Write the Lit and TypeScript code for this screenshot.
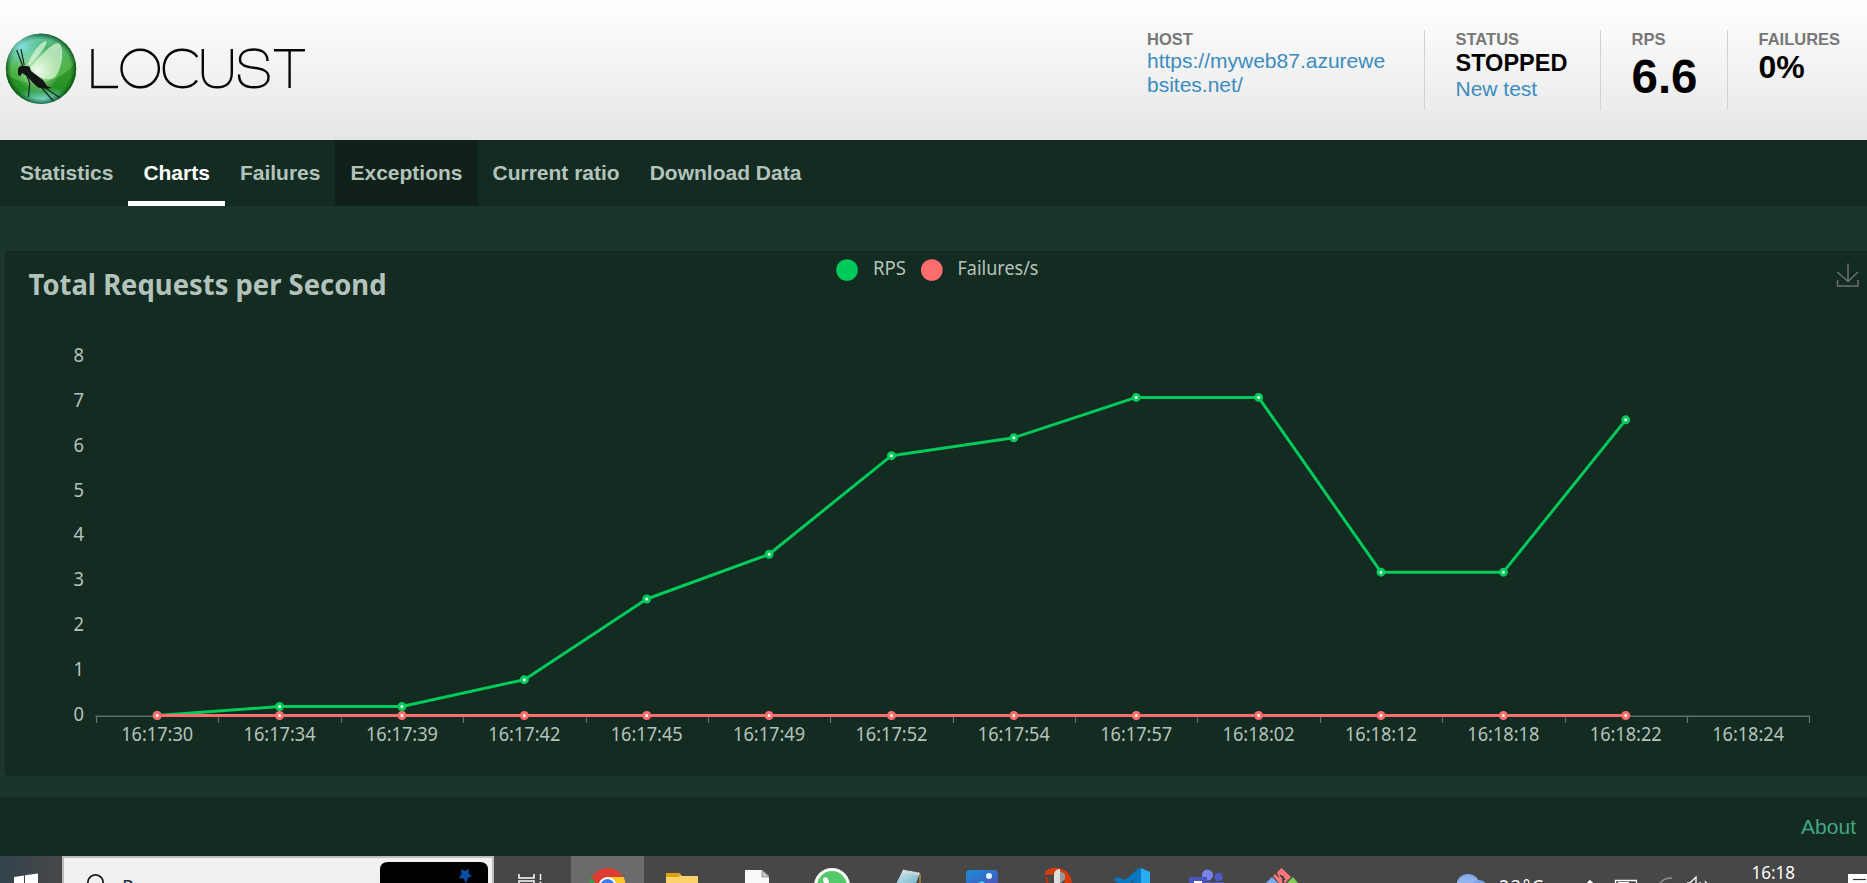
import { LitElement, html, svg, css } from "lit";
import { customElement } from "lit/decorators.js";

const TIMES = ["16:17:30", "16:17:34", "16:17:39", "16:17:42", "16:17:45", "16:17:49", "16:17:52", "16:17:54", "16:17:57", "16:18:02", "16:18:12", "16:18:18", "16:18:22", "16:18:24"];
const RPS = [0, 0.2, 0.2, 0.8, 2.6, 3.6, 5.8, 6.2, 7.1, 7.1, 3.2, 3.2, 6.6];

// Plot geometry, relative to the chart card
const LEFT = 90;
const STEP = 122.38;
const BASE = 463.5;
const UNIT = 44.8;
const px = (i: number) => LEFT + STEP * (i + 0.5);
const py = (v: number) => BASE - v * UNIT;

@customElement("locust-logo")
class LocustLogo extends LitElement {
  static styles = css`
    :host { display: block; }
    svg { display: block; }
  `;
  render() {
    return html`<svg width="310" height="140" viewBox="0 0 310 140" role="img" aria-label="LOCUST">
      <defs>
        <linearGradient id="ball" x1="0" y1="0" x2="0" y2="1">
          <stop offset="0" stop-color="#5fc7b0" /><stop offset=".2" stop-color="#4fb568" />
          <stop offset=".5" stop-color="#52b54a" /><stop offset=".8" stop-color="#35a634" /><stop offset="1" stop-color="#48b9a0" />
        </linearGradient>
        <radialGradient id="edge"><stop offset=".82" stop-color="#064a12" stop-opacity="0" /><stop offset="1" stop-color="#04380f" stop-opacity=".85" /></radialGradient>
        <radialGradient id="sky"><stop offset="0" stop-color="#8fe9f4" stop-opacity=".85" /><stop offset="1" stop-color="#7fe0d8" stop-opacity="0" /></radialGradient>
        <radialGradient id="glow"><stop offset="0" stop-color="#fff" /><stop offset=".35" stop-color="#e8fbe2" stop-opacity=".65" /><stop offset="1" stop-color="#b7eab0" stop-opacity="0" /></radialGradient>
        <clipPath id="round"><circle cx="41" cy="68.700" r="35.200" /></clipPath>
      </defs>
      <g clip-path="url(#round)">
        <circle cx="41" cy="69" r="36" fill="url(#ball)" />
        <path d="M5 73Q16 84 40 82T77 60V105H5Z" fill="#087008" opacity=".4" />
        <ellipse cx="43" cy="101" rx="30" ry="15" fill="url(#sky)" />
        <circle cx="41" cy="69" r="36" fill="url(#edge)" />
        <ellipse cx="21" cy="47" rx="25" ry="23" fill="url(#sky)" />
        <circle cx="38" cy="71" r="22" fill="url(#glow)" />
        <path d="M28 65C31 54 40 42 46 41C49 45 36 58 29 66Z" fill="#d9f5dc" opacity=".72" />
        <path d="M30 68C39 58 50 44 58 43C66 45 62 72 54 78C45 82 35 75 30 68Z" fill="#e3f8df" opacity=".66" />
        <path d="M18 75V70Q18 66 22.500 65.500L29.500 66.500L31 71L43 80L47 86L52 88L46 89L38 87.500L31 81L26 75.500L22 73L20.500 76Z" fill="#111714" />
        <path d="M22.700 66L16.700 50M24.200 65L21 49M26.500 75L29.800 83L28.300 97M41 87L53 100.500M45.500 88L60 98" fill="none" stroke="#17231f" stroke-width="1.200" />
      </g>
      <g fill="none" stroke="#080808" stroke-width="2.4">
        <path d="M92.500 49V87H118" />
        <ellipse cx="140.200" cy="68.500" rx="18.700" ry="18.800" />
        <path d="M197.300 57C193 50.500 188 49.700 182.500 49.700C171 49.700 163.800 57 163.800 68.500S171 87.300 182.500 87.300C188.500 87.300 193.500 85.500 197 80.500" />
        <path d="M202.800 49V73C202.800 82 208 87.300 217.300 87.300S231.800 82 231.800 73V49" />
        <path d="M267.500 61C267.500 53.500 262 49.500 254 49.500C245 49.500 240 53.500 240 59.500C240 72 268.500 63.500 268.500 77C268.500 83.500 263 87.300 254 87.300C244.500 87.300 239 83 239 74.500" />
        <path d="M274 50.300H305M289.600 50V88" />
      </g>
    </svg>`;
  }
}

@customElement("rps-chart")
class RpsChart extends LitElement {
  static styles = css`
    :host { display: block; }
    svg { display: block; overflow: visible; }
    text { font-family: "Noto Sans", "Open Sans", sans-serif; font-size: 19.500px; fill: #b3c3bc; }
    .title { font-size: 28px; font-weight: 700; }
    .mid { text-anchor: middle; }
    .end { text-anchor: end; }
  `;
  private series(values: number[], color: string) {
    return svg`<polyline points=${values.map((v, i) => `${px(i)},${py(v)}`).join(" ")} fill="none" stroke=${color} stroke-width="3" stroke-linejoin="bevel" />
      ${values.map((v, i) => svg`<circle cx=${px(i)} cy=${py(v)} r="3" fill="#fff" stroke=${color} stroke-width="3" />`)}`;
  }
  render() {
    return html`<svg width="1861" height="523" viewBox="0 0 1861 523">
      <text class="title" x="22.500" y="43" textLength="358" lengthAdjust="spacingAndGlyphs">Total Requests per Second</text>
      <circle cx="841" cy="18" r="10.800" fill="#00ca5a" />
      <text x="867" y="23" textLength="33" lengthAdjust="spacingAndGlyphs">RPS</text>
      <circle cx="925.800" cy="18" r="10.800" fill="#ff6d6d" />
      <text x="951.500" y="23" textLength="81" lengthAdjust="spacingAndGlyphs">Failures/s</text>
      <path d="M1842 11.500V29M1831.500 20L1842 29.500L1852 20M1831.500 28V34H1852V28" fill="none" stroke="#6b706e" stroke-width="1.500" />
      ${[0, 1, 2, 3, 4, 5, 6, 7, 8].map((v) => svg`<text class="end" x="78" y=${py(v) + 5} textLength="10.500" lengthAdjust="spacingAndGlyphs">${v}</text>`)}
      <path d="M89.500 464.300H1804" stroke="#5d7168" stroke-width="1.500" />
      ${Array.from({ length: 15 }, (_, i) => svg`<path d=${`M${Math.round(LEFT + STEP * i) + 0.5} 464V471`} stroke="#5d7168" stroke-width="1.300" />`)}
      ${TIMES.map((t, i) => svg`<text class="mid" x=${px(i)} y="489" textLength="72" lengthAdjust="spacingAndGlyphs">${t}</text>`)}
      ${this.series(RPS, "#00ca5a")}
      ${this.series(RPS.map(() => 0), "#ff6d6d")}
    </svg>`;
  }
}

@customElement("task-bar")
class TaskBar extends LitElement {
  static styles = css`
    :host { display: block; height: 27px; overflow: hidden; background: #474747; }
    svg { display: block; }
    text { font-family: "Noto Sans", "Open Sans", sans-serif; fill: #fff; }
    .query { fill: #222f45; font-size: 19px; }
    .tray { font-size: 17.500px; }
  `;
  render() {
    return html`<svg width="1867" height="27" viewBox="0 0 1867 27">
      <defs>
        <linearGradient id="start"><stop offset="0" stop-color="#33434c" /><stop offset="1" stop-color="#474747" /></linearGradient>
        <linearGradient id="photo" x1="0" x2="1" y1="0" y2="1"><stop offset="0" stop-color="#1590dc" /><stop offset="1" stop-color="#4a55ba" /></linearGradient>
        <linearGradient id="note" x2="1" y2="1"><stop offset="0" stop-color="#d8edf2" /><stop offset="1" stop-color="#69aec4" /></linearGradient>
        <linearGradient id="cloud" x2="0" y2="1"><stop offset="0" stop-color="#7da4ea" /><stop offset="1" stop-color="#c2d6fb" /></linearGradient>
      </defs>
      <rect width="62" height="27" fill="url(#start)" />
      <path d="M14 21L24 19.500V27H14ZM25 19.300L38 17.500V27H25Z" fill="#fff" />
      <rect x="62" width="432" height="27" fill="#bcbcbc" />
      <rect x="64" y="2" width="428" height="25" fill="#f1f1f1" />
      <circle cx="95.500" cy="26.500" r="7.700" fill="none" stroke="#111" stroke-width="1.700" />
      <text class="query" x="122" y="38">P</text>
      <path d="M380 27V14Q380 6 388 6H480Q488 6 488 14V27Z" fill="#000" />
      <path d="M461 13L464.500 15L469 13L468.500 17.500L472 20L468 22L466 27L463.500 22.500L458.500 22L461.500 18.500Z" fill="#0b4da8" />
      <path d="M519 18V22H534V18M519 27V25H534V27M540.500 18V24M540.500 25.500V27" fill="none" stroke="#fff" stroke-width="1.500" />
      <rect x="571" width="73" height="27" fill="#6b6b6b" />
      <g>
        <circle cx="607.500" cy="30" r="18" fill="#de3c32" />
        <path d="M607.500 21H623.500Q626 26 625.500 31H607Z" fill="#fdc72f" />
        <path d="M591.500 21.500L600 34H589Q588.500 27 591.500 21.500Z" fill="#2ea44f" />
        <circle cx="607.500" cy="30" r="9" fill="#fff" /><circle cx="607.500" cy="30" r="7" fill="#3b7cf0" />
      </g>
      <path d="M666 27V17H679L682 20H698V27Z" fill="#fdd26a" /><path d="M666 21V17H679L681 19L678 21Z" fill="#e2a008" />
      <path d="M745 27V14H762L769 20V27Z" fill="#f8f9f9" /><path d="M762 14V21H769Z" fill="#c6c8c9" stroke="#777" stroke-width=".7" />
      <circle cx="832" cy="30" r="18" fill="#fff" /><circle cx="832" cy="30" r="15" fill="#54c969" />
      <path d="M824 27Q821 21 826 21.500Q828 21 829 27Z" fill="#fff" />
      <path d="M903 14L920 17L915 30H895Z" fill="url(#note)" /><path d="M903 15L920 18" stroke="#ddd" stroke-width="3" stroke-dasharray="1.500 1" /><path d="M920 18V27" stroke="#b58538" stroke-width="1.500" />
      <path d="M966 27V18Q966 14 970 14H994Q998 14 998 18V27Z" fill="url(#photo)" /><circle cx="989" cy="20" r="3" fill="#e3f3ff" /><path d="M978 27L982 25L985 27Z" fill="#45d4fb" />
      <path d="M1045 16Q1050 11 1058 12Q1071 14 1072 28H1065Q1064 20 1058 18L1045 19Z" fill="#d83b09" /><path d="M1047 21Q1046 24 1048 28" stroke="#c62e0b" stroke-width="2" fill="none" />
      <path d="M1054 28V18Q1055 13 1060 13V28Z" fill="#dedede" /><path d="M1060 15V28L1065 23V18Z" fill="#999" />
      <path d="M1114 24Q1115 20 1120 22L1125 24L1139 12L1150 16V27H1132L1136 22L1130 27H1118Z" fill="#0878c5" /><path d="M1141 12L1150 16V27H1141Z" fill="#2aacf1" />
      <circle cx="1207.500" cy="19" r="5.500" fill="#7b83eb" /><circle cx="1218.500" cy="21" r="4" fill="#5059c9" />
      <path d="M1207 26H1224V27H1207Z" fill="#5059c9" /><rect x="1189" y="21" width="18" height="8" fill="#4b53bc" /><path d="M1194 26H1202" stroke="#fff" stroke-width="2" />
      <path d="M1277 16.500L1281.500 12L1291 21L1285 27L1280 24Z" fill="#fa7878" /><path d="M1275 18L1284 27H1279L1273 20Z" fill="#fa7878" />
      <path d="M1280 19L1285 24M1283 20V27" stroke="#35383b" stroke-width="1.500" /><path d="M1266 27L1272 21L1278 27Z" fill="#7aacf5" /><path d="M1287 27L1293 21L1298 27Z" fill="#82ce58" />
      <circle cx="1468" cy="29.500" r="11.500" fill="url(#cloud)" /><circle cx="1479" cy="33" r="9" fill="#7ea2e7" />
      <text class="tray" x="1499" y="37" textLength="44">23°C</text>
      <path d="M1586 29L1590 25L1594 29" fill="none" stroke="#fff" stroke-width="1.600" />
      <path d="M1615.500 27V24.500H1636.500V27" fill="none" stroke="#fff" stroke-width="1.300" /><rect x="1618" y="26" width="11" height="2" fill="#fff" />
      <path d="M1660 27Q1664 22 1672 22" fill="none" stroke="#929292" stroke-width="1.300" />
      <path d="M1687 27H1690L1696 21V28M1700 26V28M1705 25L1707 28" fill="none" stroke="#fff" stroke-width="1.300" />
      <text class="tray" x="1751.500" y="22.500" textLength="43.500" lengthAdjust="spacingAndGlyphs">16:18</text>
      <rect x="1848" y="18" width="19" height="9" fill="#fff" /><path d="M1853 23.500H1866" stroke="#333" stroke-width="1.200" />
    </svg>`;
  }
}

@customElement("app-root")
class AppRoot extends LitElement {
  static styles = css`
    :host { display: flex; flex-direction: column; height: 883px; overflow: hidden; background: #1a352a; font-family: "Liberation Sans", Arial, sans-serif; }
    header { flex: none; height: 140px; display: flex; justify-content: space-between; background: linear-gradient(#fff, #e6e6e6); }
    .stats { display: flex; padding-top: 30px; }
    .stat { box-sizing: border-box; height: 80px; padding-left: 30.500px; border-left: 1px solid #d2d2d2; color: #000; }
    .host { width: 277px; padding-left: 0; border-left: 0; }
    .status { width: 176px; } .rps { width: 127px; } .fail { width: 140px; }
    .label { font-size: 16.500px; line-height: 19px; font-weight: 700; color: #777; }
    a { color: #3b8cc0; text-decoration: none; font-size: 21px; line-height: 24px; display: block; }
    .host a { width: 240px; }
    .state { font-size: 23.500px; line-height: 28px; font-weight: 700; white-space: nowrap; }
    .big { font-size: 47.500px; line-height: 55px; font-weight: 700; }
    .pct { font-size: 32px; line-height: 37px; font-weight: 700; }
    nav { flex: none; height: 66px; padding-left: 5px; display: flex; background: #142b22; }
    .tab { box-sizing: border-box; height: 66px; padding: 0 15px; border-bottom: 5px solid transparent; font-size: 21px; font-weight: 700; line-height: 66px; color: #b3c3bc; white-space: nowrap; }
    .active { color: #fff; border-color: #fff; }
    .hover { background: #11211a; border-color: #11211a; }
    .card { flex: none; height: 525px; margin: 45px 0 21px 5px; box-sizing: border-box; background: #142b22; border: 1px solid #12271f; border-right: 0; border-radius: 5px 0 0 5px; }
    footer { flex: none; height: 59px; box-sizing: border-box; padding: 18px 11px 0 0; background: #142b22; display: flex; justify-content: flex-end; }
    footer a { color: #42a582; }
  `;
  render() {
    return html`
      <header>
        <locust-logo></locust-logo>
        <div class="stats">
          <div class="stat host"><div class="label">HOST</div><a>https://myweb87.azurewe<br />bsites.net/</a></div>
          <div class="stat status"><div class="label">STATUS</div><div class="state">STOPPED</div><a>New test</a></div>
          <div class="stat rps"><div class="label">RPS</div><div class="big">6.6</div></div>
          <div class="stat fail"><div class="label">FAILURES</div><div class="pct">0%</div></div>
        </div>
      </header>
      <nav>
        ${["Statistics", "Charts", "Failures", "Exceptions", "Current ratio", "Download Data"].map((t) => html`<div class="tab ${t === "Charts" ? "active" : t === "Exceptions" ? "hover" : ""}">${t}</div>`)}
      </nav>
      <section class="card"><rps-chart></rps-chart></section>
      <footer><a>About</a></footer>
      <task-bar></task-bar>`;
  }
}
